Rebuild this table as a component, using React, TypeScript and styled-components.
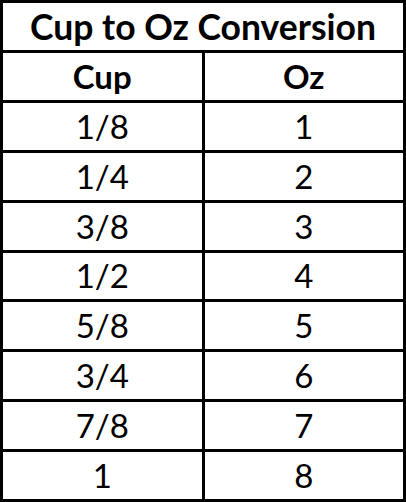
import { Fragment } from "react";
import styled, { createGlobalStyle } from "styled-components";

const rows: [string, string][] = [
  ["1/8", "1"],
  ["1/4", "2"],
  ["3/8", "3"],
  ["1/2", "4"],
  ["5/8", "5"],
  ["3/4", "6"],
  ["7/8", "7"],
  ["1", "8"],
];

const GlobalStyle = createGlobalStyle`
  html, body {
    margin: 0;
    padding: 0;
    background: #ffffff;
  }
`;

const Table = styled.div`
  display: grid;
  grid-template-columns: 1fr 1fr;
  grid-template-rows: repeat(10, 1fr);
  gap: 3px;
  padding: 3px;
  width: 406px;
  height: 502px;
  box-sizing: border-box;
  background: #000000;
  font-family: Lato, "Liberation Sans", sans-serif;
  color: #000000;
`;

const Cell = styled.div<{ $bold?: boolean }>`
  display: flex;
  align-items: center;
  justify-content: center;
  background: #ffffff;
  font-size: 33px;
  font-weight: ${(p) => (p.$bold ? 700 : 400)};
  line-height: 1;
`;

const Title = styled(Cell)`
  grid-column: 1 / span 2;
  font-size: 35.5px;
  font-weight: 700;
`;

export default function App() {
  return (
    <>
      <GlobalStyle />
      <Table>
        <Title>Cup to Oz Conversion</Title>
        <Cell $bold>Cup</Cell>
        <Cell $bold>Oz</Cell>
        {rows.map(([cup, oz]) => (
          <Fragment key={cup + oz}>
            <Cell>{cup}</Cell>
            <Cell>{oz}</Cell>
          </Fragment>
        ))}
      </Table>
    </>
  );
}
